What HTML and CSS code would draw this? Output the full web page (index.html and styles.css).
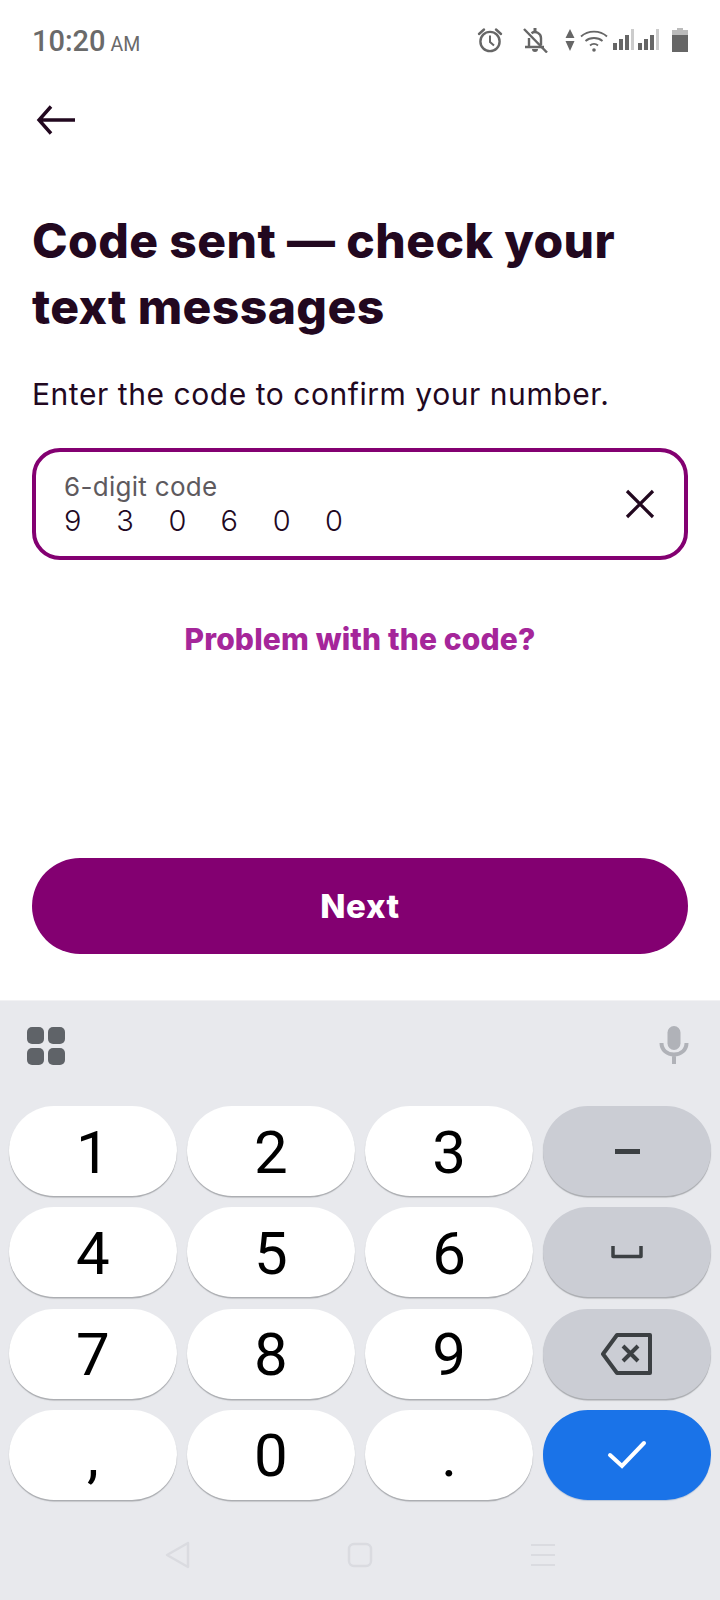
FILE: index.html
```html
<!DOCTYPE html>
<html lang="en">
<head>
<meta charset="utf-8">
<title>Code sent</title>
<link rel="stylesheet" href="styles.css">
</head>
<body>
<div class="screen">
  <div class="status">
    <div class="time">10:20<span class="ampm">AM</span></div>
    <div class="status-icons">
      <svg class="si alarm" width="28" height="28" viewBox="0 0 28 28" fill="none" stroke="#666" stroke-width="2.4"><circle cx="14" cy="15.5" r="9.6"/><path d="M14 9.5v6.5l4 3.6" stroke-width="2"/><path d="M3 8l5-4.5M25 8l-5-4.5" stroke-linecap="round"/></svg>
      <svg class="si bell" width="26" height="26" viewBox="0 0 26 26" fill="none" stroke="#666" stroke-width="2.4"><path d="M3 20h19M7 20v-9M19 18v-7a6 6 0 0 0-9.500-4.800"/><path d="M13 1v3.500" stroke-width="3"/><path d="M10 22a3 3 0 0 0 6 0" fill="#666" stroke="none"/><path d="M2 2l23 23.500"/></svg>
      <svg class="si updown" width="10" height="22" viewBox="0 0 10 22" fill="#666"><path d="M5 0l4.500 9h-9zM5 22l-4.500-10h9z"/></svg>
      <svg class="si wifi" width="28" height="24" viewBox="0 0 28 24" fill="none" stroke="#666" stroke-width="1.800"><path d="M1 8.500C8 2 20 2 27 8.500M5.500 13C10 9 18 9 22.500 13M10 17.500c2.300-2 5.700-2 8 0"/><circle cx="14" cy="22" r="1.800" fill="#666" stroke="none"/></svg>
      <svg class="si signal" width="22" height="22" viewBox="0 0 22 22"><path fill="#666" d="M0 14h4v7H0zM6 10h4v11H6zM12 6h4v15h-4z"/><path fill="#ccc" d="M18 0h3v21h-3z"/></svg>
      <svg class="si signal" width="22" height="22" viewBox="0 0 22 22"><path fill="#666" d="M0 14h4v7H0zM6 10h4v11H6zM12 6h4v15h-4z"/><path fill="#ccc" d="M18 0h3v21h-3z"/></svg>
      <svg class="si battery" width="16" height="24" viewBox="0 0 16 24"><path fill="#bbb" d="M5 0h6v2h5v7H0V2h5z"/><path fill="#666" d="M0 7h16v17H0z"/></svg>
    </div>
  </div>

  <div class="content">
    <svg class="back" width="40" height="30" viewBox="0 0 40 30" fill="none" stroke="#22081f" stroke-width="3.400"><path d="M15 1.500L3 15l12 13.500M3 15h36"/></svg>
    <h1 class="title">Code sent — check your text messages</h1>
    <p class="sub">Enter the code to confirm your number.</p>
    <div class="field">
      <div class="field-text">
        <div class="field-label">6-digit code</div>
        <div class="field-value"><span>9</span><span>3</span><span>0</span><span>6</span><span>0</span><span>0</span></div>
      </div>
      <svg class="clear" width="30" height="30" viewBox="0 0 30 30" stroke="#22081f" stroke-width="3.200"><path d="M2 2l26 26M28 2L2 28"/></svg>
    </div>
    <div class="problem">Problem with the code?</div>
    <div class="next">Next</div>
  </div>

  <div class="keyboard">
    <div class="kb-tools">
      <svg width="38" height="38" viewBox="0 0 38 38" fill="#5f6368"><rect width="17" height="17" rx="5"/><rect x="21" width="17" height="17" rx="5"/><rect y="21" width="17" height="17" rx="5"/><rect x="21" y="21" width="17" height="17" rx="5"/></svg>
      <svg class="mic" width="30" height="40" viewBox="0 0 30 40" fill="none"><rect x="8.500" y="1" width="13" height="24" rx="6.500" fill="#b0b2b8"/><path d="M2.500 18c0 7 5.500 11.500 12.500 11.500S27.500 25 27.500 18M15 29v10" stroke="#b0b2b8" stroke-width="4"/></svg>
    </div>
    <div class="keys">
      <div class="key"><span class="digit">1</span></div><div class="key"><span class="digit">2</span></div><div class="key"><span class="digit">3</span></div>
      <div class="key fn"><span class="dash"></span></div>
      <div class="key"><span class="digit">4</span></div><div class="key"><span class="digit">5</span></div><div class="key"><span class="digit">6</span></div>
      <div class="key fn"><svg width="32" height="13" viewBox="0 0 32 13" fill="none" stroke="#3c4043" stroke-width="3.500" stroke-linejoin="round"><path d="M2 0v10.500h28V0"/></svg></div>
      <div class="key"><span class="digit">7</span></div><div class="key"><span class="digit">8</span></div><div class="key"><span class="digit">9</span></div>
      <div class="key fn"><svg width="52" height="42" viewBox="0 0 52 42" fill="none" stroke="#3c4043" stroke-width="4" stroke-linejoin="round"><path d="M16 2h33v38H16L2 21zM22 13l15 15M37 13L22 28"/></svg></div>
      <div class="key"><span class="digit">,</span></div><div class="key"><span class="digit">0</span></div><div class="key"><span class="digit">.</span></div>
      <div class="key go"><svg width="40" height="30" viewBox="0 0 40 30" fill="none" stroke="#fff" stroke-width="4" stroke-linecap="round"><path d="M3 15l12 11L37 3"/></svg></div>
    </div>
    <div class="nav">
      <svg width="26" height="28" viewBox="0 0 26 28" fill="none" stroke="#dadbe0" stroke-width="2.500" stroke-linejoin="round"><path d="M24 2L3 14l21 12z"/></svg>
      <svg width="26" height="26" viewBox="0 0 26 26" fill="none" stroke="#dadbe0" stroke-width="2.500"><rect x="2" y="2" width="22" height="22" rx="5"/></svg>
      <svg width="26" height="24" viewBox="0 0 26 24" fill="none" stroke="#dadbe0" stroke-width="2"><path d="M1 2h24M1 12h24M1 22h24"/></svg>
    </div>
  </div>
</div>
</body>
</html>
```

FILE: styles.css
```css
* { box-sizing: border-box; }
html, body { margin: 0; padding: 0; background: #fff; }
.screen {
  width: 720px;
  height: 1600px;
  display: flex;
  flex-direction: column;
  font-family: Inter, "Liberation Sans", sans-serif;
  overflow: hidden;
}
.status {
  height: 84px;
  padding: 24px 32px 0;
  display: flex;
  justify-content: space-between;
  align-items: flex-start;
}
.time {
  font-family: Roboto, sans-serif;
  font-size: 29px;
  font-weight: 500;
  line-height: 34px;
  color: #6a6a6a;
}
.ampm { font-size: 19.500px; font-weight: 400; margin-left: 5px; }
.status-icons { display: flex; align-items: center; height: 32px; }
.si { display: block; flex: none; }
.alarm { margin-right: 18px; }
.bell { margin-right: 17px; }
.updown { margin-right: 5px; }
.wifi { margin-right: 5px; }
.signal { margin-right: 3px; }
.battery { margin-left: 9px; }
.content {
  height: 917px;
  padding: 0 32px;
  display: flex;
  flex-direction: column;
  align-items: stretch;
  border-bottom: 1px solid #f2f2f4;
}
.back { margin: 21px 0 0 4px; flex: none; }
.title {
  margin: 73px 0 0;
  font-size: 48px;
  font-weight: 800;
  line-height: 66px;
  letter-spacing: 0.4px;
  color: #22081f;
  width: 640px;
}
.sub {
  margin: 34px 0 0;
  font-size: 30px;
  line-height: 40px;
  font-weight: 400;
  letter-spacing: 0.55px;
  color: #22081f;
}
.field {
  margin-top: 34px;
  height: 112px;
  border: 4px solid #830071;
  border-radius: 28px;
  padding: 0 29px 0 28px;
  display: flex;
  align-items: center;
  justify-content: space-between;
}
.field-text { display: flex; flex-direction: column; padding-top: 2px; }
.field-label { font-size: 26px; line-height: 32px; letter-spacing: 0.3px; color: #5e5a5e; }
.field-value { display: flex; font-size: 29px; font-weight: 300; line-height: 36px; color: #22081f; }
.field-value span { width: 52.200px; }
.clear { display: block; }
.problem {
  margin-top: 60px;
  text-align: center;
  font-size: 30px;
  font-weight: 800;
  line-height: 38px;
  letter-spacing: 0.15px;
  color: #a5269a;
}
.next {
  margin-top: 200px;
  height: 96px;
  border-radius: 48px;
  background: #830071;
  color: #fff;
  font-size: 33px;
  font-weight: 800;
  letter-spacing: 0.6px;
  display: flex;
  align-items: center;
  justify-content: center;
}
.keyboard {
  flex: 1;
  background: #e8e9ed;
  display: flex;
  flex-direction: column;
  font-family: Roboto, sans-serif;
}
.kb-tools {
  height: 105px;
  padding: 26px 31px 0 27px;
  display: flex;
  justify-content: space-between;
  align-items: flex-start;
}
.mic { margin-top: -2px; }
.keys {
  display: grid;
  grid-template-columns: repeat(4, 1fr);
  grid-auto-rows: 90px;
  column-gap: 10.500px;
  row-gap: 11.300px;
  padding: 0 9px;
}
.key {
  background: #fff;
  border-radius: 45px;
  box-shadow: 0 1.500px 1px #a9abaf;
  display: flex;
  align-items: center;
  justify-content: center;
}
.digit {
  font-size: 60px;
  line-height: 90px;
  color: #000;
  margin-top: 3px;
}
.fn { background: #cbcdd4; }
.go { background: #1a73e8; box-shadow: 0 1px 1px #b9c6d9; }
.dash { display: block; width: 25px; height: 5px; background: #3c4043; }
.nav {
  flex: 1;
  display: flex;
  justify-content: center;
  align-items: center;
  gap: 157px;
  padding-top: 11px;
}
```
